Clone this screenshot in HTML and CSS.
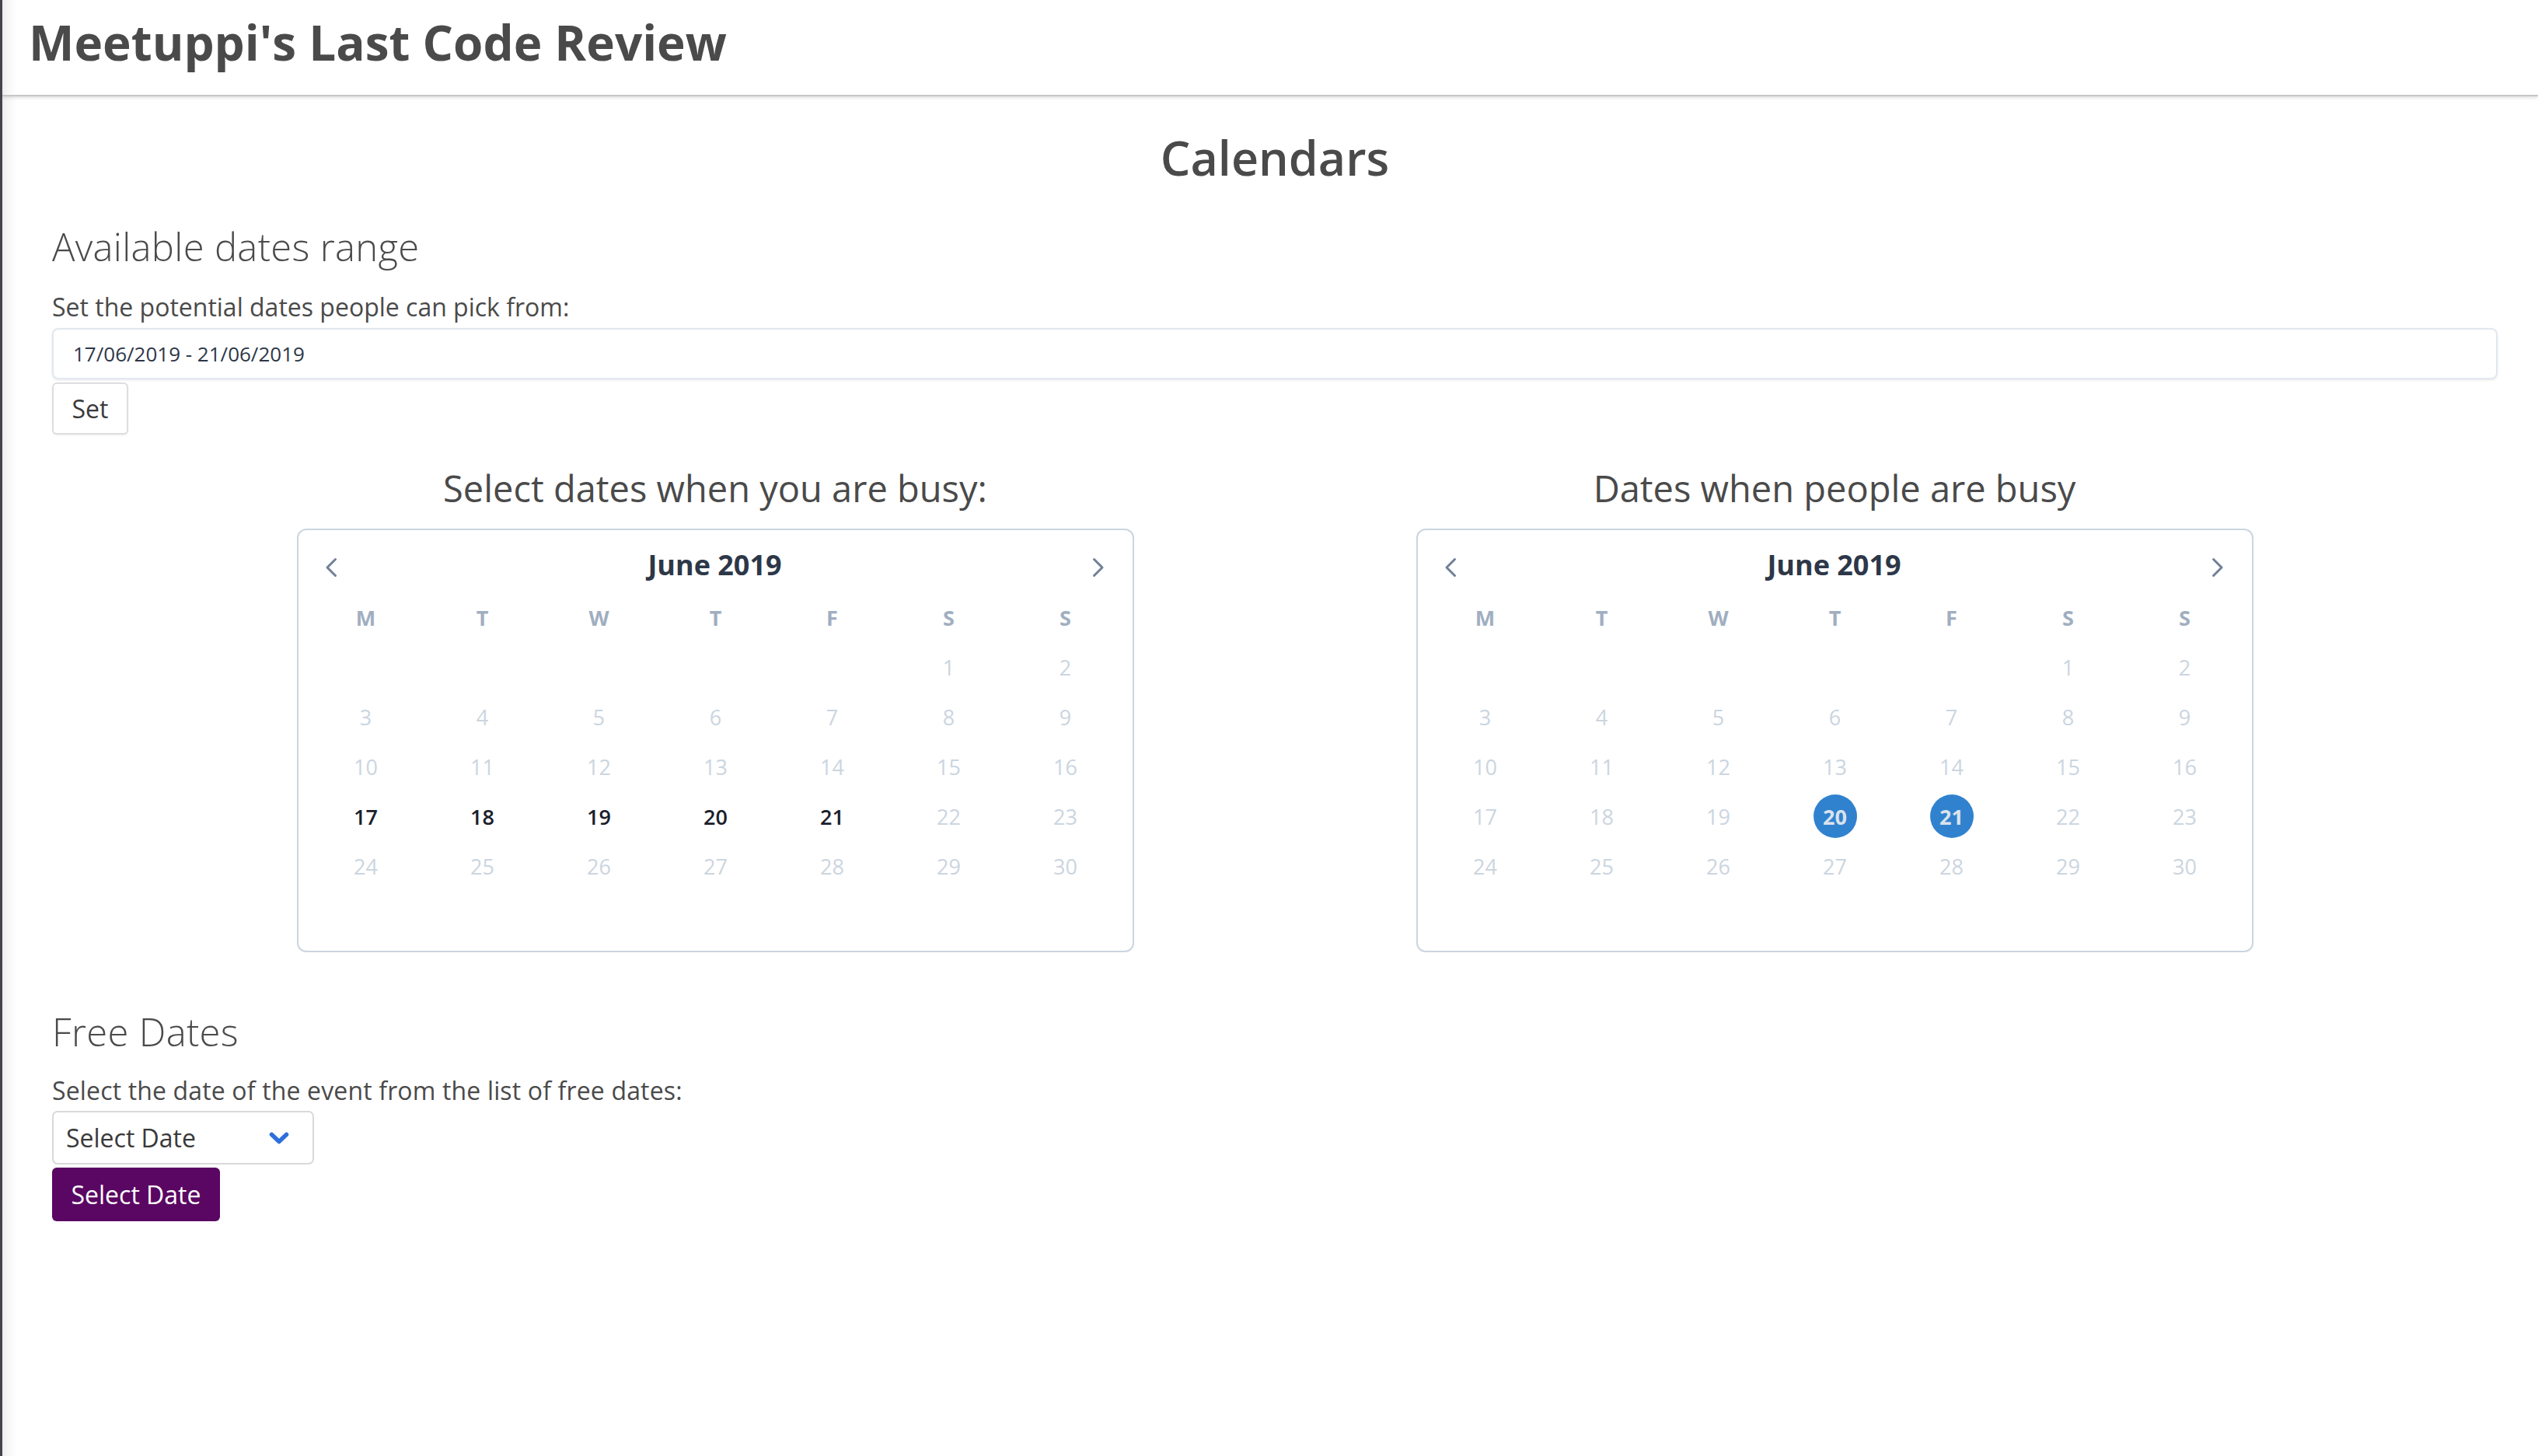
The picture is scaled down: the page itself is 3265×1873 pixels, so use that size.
FILE: index.html
```html
<!DOCTYPE html>
<html lang="en">
<head>
<meta charset="utf-8">
<title>Meetuppi's Last Code Review</title>
<link rel="stylesheet" href="styles.css">
</head>
<body>
<header class="topbar">
  <h1 class="brand">Meetuppi's Last Code Review</h1>
</header>
<main class="page">
  <h2 class="page-title">Calendars</h2>

  <section class="range">
    <h3 class="section-title">Available dates range</h3>
    <p class="label">Set the potential dates people can pick from:</p>
    <div class="date-input">17/06/2019 - 21/06/2019</div>
    <button class="btn-set">Set</button>
  </section>

  <section class="calendars">
    <div class="cal-col">
      <h3 class="cal-heading">Select dates when you are busy:</h3>
      <div class="cal">
        <div class="cal-head">
          <svg class="chev" viewBox="0 0 16 26" width="16" height="26"><path d="M13.5 2.5 L3 13 L13.5 23.5"/></svg>
          <span class="cal-title">June 2019</span>
          <svg class="chev" viewBox="0 0 16 26" width="16" height="26"><path d="M2.5 2.5 L13 13 L2.5 23.5"/></svg>
        </div>
        <div class="cal-grid">
          <span class="wd">M</span><span class="wd">T</span><span class="wd">W</span><span class="wd">T</span><span class="wd">F</span><span class="wd">S</span><span class="wd">S</span>
          <span class="day"></span><span class="day"></span><span class="day"></span><span class="day"></span><span class="day"></span><span class="day off">1</span><span class="day off">2</span>
          <span class="day off">3</span><span class="day off">4</span><span class="day off">5</span><span class="day off">6</span><span class="day off">7</span><span class="day off">8</span><span class="day off">9</span>
          <span class="day off">10</span><span class="day off">11</span><span class="day off">12</span><span class="day off">13</span><span class="day off">14</span><span class="day off">15</span><span class="day off">16</span>
          <span class="day on">17</span><span class="day on">18</span><span class="day on">19</span><span class="day on">20</span><span class="day on">21</span><span class="day off">22</span><span class="day off">23</span>
          <span class="day off">24</span><span class="day off">25</span><span class="day off">26</span><span class="day off">27</span><span class="day off">28</span><span class="day off">29</span><span class="day off">30</span>
          <span class="day"></span><span class="day"></span><span class="day"></span><span class="day"></span><span class="day"></span><span class="day"></span><span class="day"></span>
        </div>
      </div>
    </div>
    <div class="cal-col">
      <h3 class="cal-heading">Dates when people are busy</h3>
      <div class="cal">
        <div class="cal-head">
          <svg class="chev" viewBox="0 0 16 26" width="16" height="26"><path d="M13.5 2.5 L3 13 L13.5 23.5"/></svg>
          <span class="cal-title">June 2019</span>
          <svg class="chev" viewBox="0 0 16 26" width="16" height="26"><path d="M2.5 2.5 L13 13 L2.5 23.5"/></svg>
        </div>
        <div class="cal-grid">
          <span class="wd">M</span><span class="wd">T</span><span class="wd">W</span><span class="wd">T</span><span class="wd">F</span><span class="wd">S</span><span class="wd">S</span>
          <span class="day"></span><span class="day"></span><span class="day"></span><span class="day"></span><span class="day"></span><span class="day off">1</span><span class="day off">2</span>
          <span class="day off">3</span><span class="day off">4</span><span class="day off">5</span><span class="day off">6</span><span class="day off">7</span><span class="day off">8</span><span class="day off">9</span>
          <span class="day off">10</span><span class="day off">11</span><span class="day off">12</span><span class="day off">13</span><span class="day off">14</span><span class="day off">15</span><span class="day off">16</span>
          <span class="day off">17</span><span class="day off">18</span><span class="day off">19</span><span class="day busy"><i class="dot">20</i></span><span class="day busy"><i class="dot">21</i></span><span class="day off">22</span><span class="day off">23</span>
          <span class="day off">24</span><span class="day off">25</span><span class="day off">26</span><span class="day off">27</span><span class="day off">28</span><span class="day off">29</span><span class="day off">30</span>
          <span class="day"></span><span class="day"></span><span class="day"></span><span class="day"></span><span class="day"></span><span class="day"></span><span class="day"></span>
        </div>
      </div>
    </div>
  </section>

  <section class="free">
    <h3 class="section-title">Free Dates</h3>
    <p class="label">Select the date of the event from the list of free dates:</p>
    <div class="select">
      <span>Select Date</span>
      <svg class="sel-chev" viewBox="0 0 26 16" width="26" height="16"><path d="M3.5 3.5 L13 12.5 L22.5 3.5"/></svg>
    </div>
    <button class="btn-primary">Select Date</button>
  </section>
</main>
</body>
</html>
```

FILE: styles.css
```css
html, body {
  margin: 0;
  padding: 0;
}
body {
  min-height: 1873px;
  box-sizing: border-box;
  border-left: 3px solid #47434e;
  background: linear-gradient(to right, #e9e9e9 0, #f7f7f7 10px, #ffffff 22px);
  font-family: "Open Sans", "Noto Sans", sans-serif;
  color: #4a4a4a;
}

.topbar {
  height: 122px;
  box-sizing: content-box;
  border-bottom: 2px solid #c6c6c6;
  box-shadow: 0 2px 4px rgba(0, 0, 0, 0.12);
  padding: 0 0 0 34px;
}
.brand {
  margin: 0;
  padding-top: 23px;
  font-size: 62px;
  line-height: 62px;
  font-weight: 700;
  color: #4a4a4a;
}

.page {
  padding: 0 52px 0 64px;
}
.page-title {
  margin: 47px 0 0;
  text-align: center;
  font-size: 61px;
  line-height: 64px;
  font-weight: 600;
}
.section-title {
  margin: 58px 0 0;
  font-size: 49px;
  line-height: 48px;
  font-weight: 300;
  letter-spacing: 0.3px;
}
.label {
  margin: 38px 0 0;
  font-size: 32px;
  line-height: 32px;
}
.free .label {
  letter-spacing: 0.15px;
}
.date-input {
  margin-top: 11px;
  height: 66px;
  box-sizing: border-box;
  border: 2px solid #e2e8f0;
  border-radius: 8px;
  box-shadow: 0 1px 3px rgba(0, 0, 0, 0.1);
  padding-left: 25px;
  display: flex;
  align-items: center;
  font-size: 26px;
  color: #2d3748;
}
.btn-set {
  display: block;
  margin-top: 4px;
  width: 98px;
  height: 67px;
  border: 2px solid #dedede;
  border-radius: 6px;
  background: #fff;
  box-shadow: 0 1px 2px rgba(0, 0, 0, 0.08);
  font-family: inherit;
  font-size: 32px;
  color: #3a3a3a;
  padding: 0;
}

.calendars {
  width: 2880px;
  margin: 0 auto;
  display: grid;
  grid-template-columns: 1fr 1fr;
}
.cal-col {
  display: flex;
  flex-direction: column;
  align-items: center;
}
.cal-heading {
  margin: 45px 0 0;
  font-size: 47px;
  line-height: 48px;
  font-weight: 400;
}
.cal {
  margin-top: 28px;
  width: 1077px;
  box-sizing: border-box;
  border: 2px solid #cbd5e0;
  border-radius: 12px;
  padding: 16px 13px 13px 12px;
}
.cal-head {
  height: 64px;
  display: flex;
  align-items: center;
  justify-content: space-between;
  padding: 0 22px;
}
.chev {
  display: block;
}
.chev path {
  fill: none;
  stroke: #718096;
  stroke-width: 3;
  stroke-linecap: round;
  stroke-linejoin: round;
}
.cal-title {
  font-size: 36px;
  line-height: 40px;
  padding-bottom: 7px;
  font-weight: 700;
  color: #2d3748;
}
.cal-grid {
  display: grid;
  grid-template-columns: repeat(7, 150px);
  grid-auto-rows: 64px;
}
.wd,
.day {
  display: flex;
  align-items: center;
  justify-content: center;
}
.wd {
  font-size: 27px;
  font-weight: 700;
  color: #a0aec0;
}
.day {
  font-size: 27px;
  font-weight: 500;
}
.day.off {
  color: #cbd5e0;
}
.day.on {
  color: #1a202c;
  font-weight: 600;
}
.dot {
  font-style: normal;
  width: 56px;
  height: 56px;
  border-radius: 50%;
  background: #3182ce;
  color: #dbe2ec;
  font-weight: 700;
  display: flex;
  align-items: center;
  justify-content: center;
}

.free .section-title {
  margin-top: 78px;
}
.free .label {
  margin-top: 36px;
}
.select {
  margin-top: 10px;
  width: 337px;
  height: 69px;
  box-sizing: border-box;
  border: 2px solid #d9d9d9;
  border-radius: 7px;
  padding: 0 30px 0 16px;
  display: flex;
  align-items: center;
  justify-content: space-between;
  font-size: 32px;
  color: #3a3a3a;
}
.sel-chev path {
  fill: none;
  stroke: #2f6fdb;
  stroke-width: 5.5;
  stroke-linecap: round;
  stroke-linejoin: round;
}
.btn-primary {
  display: block;
  margin-top: 4px;
  width: 216px;
  height: 69px;
  border: 0;
  border-radius: 6px;
  background: #5a0763;
  color: #ffffff;
  font-family: inherit;
  font-size: 32px;
  padding: 0;
}
```
